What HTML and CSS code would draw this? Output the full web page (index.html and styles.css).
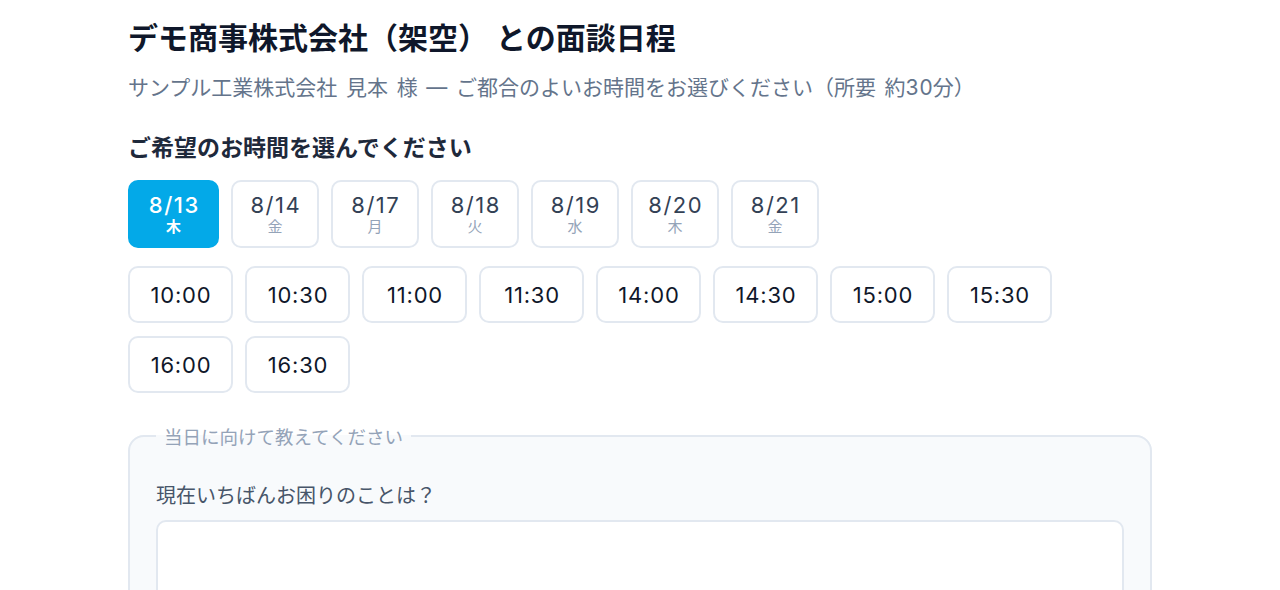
FILE: index.html
```html
<!DOCTYPE html>
<html lang="ja">
<head>
<meta charset="utf-8">
<title>面談日程</title>
<link rel="stylesheet" href="styles.css">
</head>
<body>
<main class="page">
  <h1 class="title">デモ商事株式会社（架空） との面談日程</h1>
  <p class="lead">サンプル工業株式会社 見本 様 — ご都合のよいお時間をお選びください（所要 約30分）</p>

  <h2 class="section-title">ご希望のお時間を選んでください</h2>
  <div class="dates">
    <button class="date is-active"><span class="date-num">8/13</span><span class="date-day">木</span></button>
    <button class="date"><span class="date-num">8/14</span><span class="date-day">金</span></button>
    <button class="date"><span class="date-num">8/17</span><span class="date-day">月</span></button>
    <button class="date"><span class="date-num">8/18</span><span class="date-day">火</span></button>
    <button class="date"><span class="date-num">8/19</span><span class="date-day">水</span></button>
    <button class="date"><span class="date-num">8/20</span><span class="date-day">木</span></button>
    <button class="date"><span class="date-num">8/21</span><span class="date-day">金</span></button>
  </div>

  <div class="times">
    <button class="time">10:00</button>
    <button class="time">10:30</button>
    <button class="time">11:00</button>
    <button class="time">11:30</button>
    <button class="time">14:00</button>
    <button class="time">14:30</button>
    <button class="time">15:00</button>
    <button class="time">15:30</button>
    <button class="time">16:00</button>
    <button class="time">16:30</button>
  </div>

  <fieldset class="prep">
    <legend class="prep-legend">当日に向けて教えてください</legend>
    <label class="field-label" for="q1">現在いちばんお困りのことは？</label>
    <textarea id="q1" class="field-input"></textarea>
  </fieldset>
</main>
</body>
</html>
```

FILE: styles.css
```css
* { box-sizing: border-box; }
html, body { margin: 0; padding: 0; background: #ffffff; }
body {
  font-family: Inter, "Noto Sans CJK JP", sans-serif;
  font-variant-numeric: tabular-nums;
  color: #0f172a;
}
.page {
  max-width: 1024px;
  margin: 0 auto;
  padding-top: 16px;
}
.title {
  margin: 0;
  font-size: 30px;
  font-weight: 700;
  line-height: 44px;
  color: #0f172a;
}
.lead {
  margin: 12px 0 0;
  font-size: 21px;
  line-height: 32px;
  word-spacing: 3px;
  color: #64748b;
}
.section-title {
  margin: 28px 0 0;
  font-size: 23px;
  font-weight: 700;
  line-height: 32px;
  color: #1e293b;
}
.dates {
  display: flex;
  gap: 12px;
  margin-top: 16px;
}
.date {
  display: flex;
  flex-direction: column;
  align-items: center;
  justify-content: center;
  width: 88px;
  height: 68px;
  padding: 0;
  border: 2px solid #e2e8f0;
  border-radius: 10px;
  background: #ffffff;
  font-family: inherit;
  cursor: pointer;
}
.date-num {
  font-size: 22px;
  line-height: 25px;
  letter-spacing: 1.5px;
  padding-left: 1.5px;
  color: #334155;
}
.date-day {
  font-size: 15px;
  line-height: 18px;
  color: #94a3b8;
}
.date.is-active {
  width: 91px;
  background: #03a9e8;
  border-color: #03a9e8;
}
.date.is-active .date-num,
.date.is-active .date-day { color: #ffffff; }
.date.is-active .date-num { font-weight: 500; }
.date.is-active .date-day { font-weight: 700; }
.times {
  display: flex;
  flex-wrap: wrap;
  gap: 13px 12px;
  margin-top: 18px;
  max-width: 940px;
}
.time {
  width: 105px;
  height: 57px;
  padding: 0 0 0 1px;
  border: 2px solid #e2e8f0;
  border-radius: 10px;
  background: #ffffff;
  font-family: inherit;
  font-size: 22px;
  letter-spacing: 0.8px;
  color: #0f172a;
  cursor: pointer;
}
.prep {
  margin: 30px 0 0;
  padding: 33px 26px 0;
  border: 2px solid #e2e8f0;
  border-radius: 16px;
  background: #f8fafc;
  min-width: 0;
}
.prep-legend {
  padding: 0 8px;
  margin-left: 0;
  font-size: 18.5px;
  color: #94a3b8;
}
.field-label {
  display: block;
  font-size: 20px;
  line-height: 28px;
  color: #475569;
}
.field-input {
  display: block;
  width: 100%;
  height: 120px;
  margin-top: 10px;
  border: 2px solid #e2e8f0;
  border-radius: 10px;
  background: #ffffff;
  resize: vertical;
  font-family: inherit;
}
```
